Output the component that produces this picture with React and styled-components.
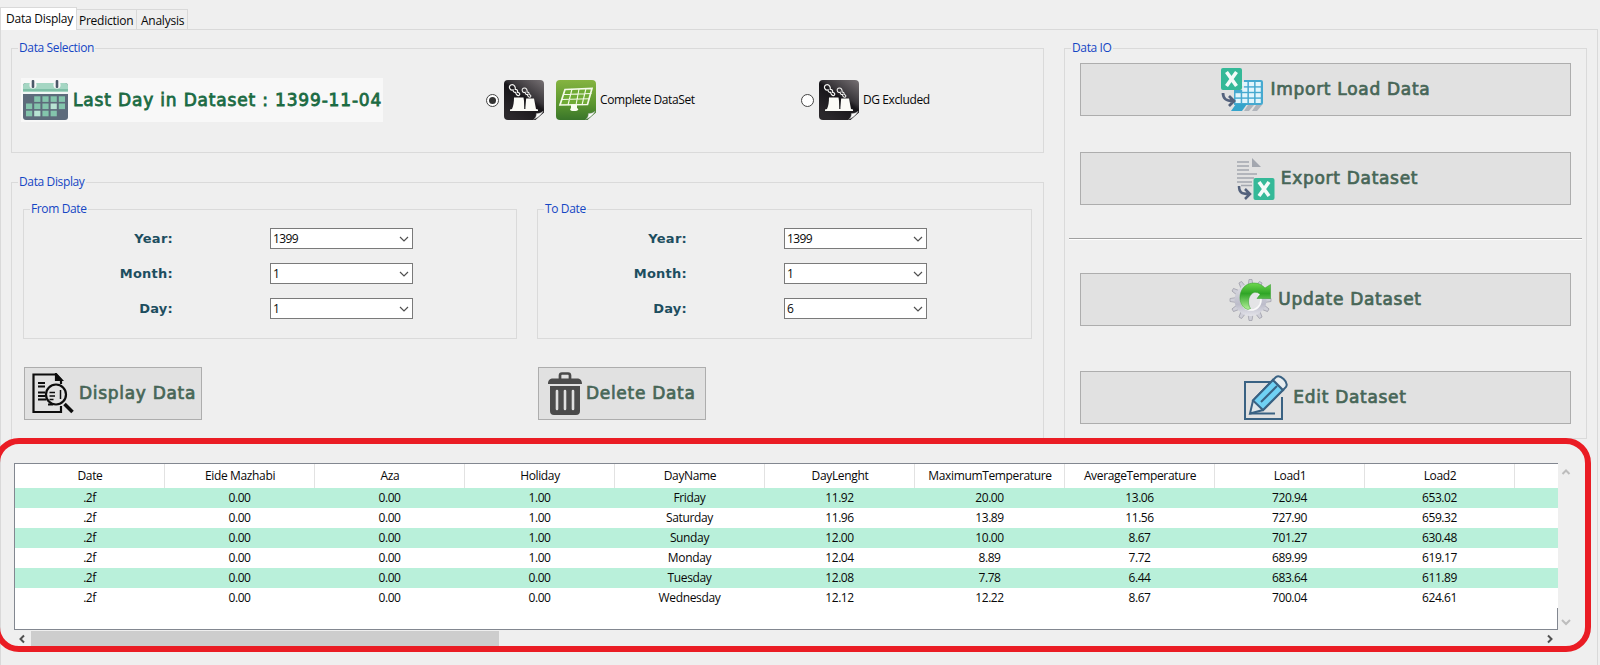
import React from 'react';
import styled, { createGlobalStyle } from 'styled-components';

const GlobalStyle = createGlobalStyle`
  * { box-sizing: border-box; }
  body { margin: 0; background: #efefef; overflow: hidden; font: 12px/16px "Open Sans", "Noto Sans", sans-serif; color: #080808; }
  button { font: inherit; padding: 0; }
`;
const verdana = '"DejaVu Sans", sans-serif';

const Window = styled.main`
  position: relative;
  width: 1600px; height: 665px;
  padding-top: 7px;
  overflow: hidden;
  background: #efefef;
`;
const Tabs = styled.nav` display: flex; align-items: flex-end; height: 23px; margin-bottom: -1px; `;
const Tab = styled.div`
  width: ${p => p.$w}px;
  height: ${p => (p.$active ? 23 : 21)}px;
  border: 1px solid #d9d9d9;
  border-left-width: ${p => (p.$active ? 1 : 0)}px;
  border-bottom-width: ${p => (p.$active ? 0 : 1)}px;
  background: ${p => (p.$active ? '#fff' : '#efefef')};
  padding-left: ${p => p.$pl}px;
  line-height: 22px;
  white-space: nowrap;
`;
const Spaced = styled.span` letter-spacing: ${p => p.$ls || 0}px; `;
const Page = styled.section`
  width: 1598px; height: 640px;
  border: 1px solid #d9d9d9; border-bottom: 0;
  padding: 10px 10px 0 10px;
`;
const Upper = styled.div` display: flex; gap: 20px; height: 399px; `;
const LeftColumn = styled.div` width: 1033px; `;
const Group = styled.fieldset`
  position: relative;
  display: flex;
  margin: 0 0 ${p => p.$mb || 0}px;
  padding: 0; min-width: 0;
  border: 0;
  width: ${p => p.$w}px; height: ${p => p.$h}px;
  &::before {
    content: ""; position: absolute; inset: 8px 0 0 0;
    border: 1px solid #dadada; pointer-events: none;
  }
`;
const Legend = styled.span`
  position: absolute; left: 7px; top: 0;
  background: #efefef; color: #1546c4;
  padding: 0 1px; letter-spacing: -0.37px;
  white-space: nowrap;
`;
const SelectionRow = styled.div` display: flex; align-items: center; height: 44px; margin: 38px 0 0 10px; `;
const LastDay = styled.div`
  display: flex; align-items: center; width: 362px; height: 44px; padding-left: 2px;
  background: #f8f8f8; color: #1b6b43;
  font: 17px/20px ${verdana}; -webkit-text-stroke: 0.8px #1b6b43; letter-spacing: 0.83px; white-space: nowrap;
  svg { margin-right: 5px; flex: none; }
`;
const RadioOption = styled.label`
  display: flex; align-items: center; margin-left: ${p => p.$ml}px; width: ${p => p.$w}px; white-space: nowrap;
  svg { flex: none; }
`;
const Radio = styled.span`
  width: 13px; height: 13px; border: 1px solid #444; border-radius: 50%; background: #fff;
  display: grid; place-items: center; margin-right: 5px; flex: none;
  &::after { content: ""; width: 7px; height: 7px; border-radius: 50%; background: ${p => (p.$on ? '#333' : 'transparent')}; }
`;
const IconPair = styled.span` display: flex; gap: 12px; margin-right: 4px; `;
const DisplayBody = styled.div` display: flex; gap: 20px; margin: 27px 0 0 12px; `;
const DateColumn = styled.div` width: ${p => p.$w}px; `;
const Fields = styled.div` display: grid; gap: 14px; padding-top: 27px; align-content: start; `;
const Field = styled.div` display: flex; align-items: center; height: 21px; `;
const FieldLabel = styled.span`
  width: 150px; margin-right: 97px; text-align: right; color: #1d4e5f;
  font: bold 13px/20px ${verdana}; letter-spacing: 0.25px;
`;
const Combo = styled.span`
  display: flex; align-items: center; justify-content: space-between;
  width: 143px; height: 21px; border: 1px solid #7a7a7a; background: #fff; padding: 0 2px;
  letter-spacing: -0.65px;
  svg { color: #505050; }
`;
const Button = styled.button`
  display: flex; align-items: center; justify-content: ${p => (p.$pl ? 'flex-start' : 'center')};
  width: ${p => p.$w}px; height: 53px; margin: 0 0 ${p => p.$mb || 0}px ${p => p.$ml || 0}px;
  padding: 0 0 2px ${p => p.$pl || 0}px;
  border: 1px solid #adadad; background: #e1e1e1; color: #476657;
  font: 17px/22px ${verdana}; -webkit-text-stroke: 0.7px #476657; letter-spacing: 0.7px; white-space: nowrap;
  svg { margin: 2px ${p => p.$gap}px 0 0; flex: none; }
`;
const IoColumn = styled.div` padding: 23px 0 0 16px; `;
const Rule = styled.div` width: 513px; height: 2px; margin: -20px 0 33px -11px; background: #a0a0a0; border-bottom: 1px solid #fff; `;

const TableArea = styled.div` display: grid; grid-template-columns: 1544px 17px; margin: 24px 0 0 3px; `;
const Table = styled.div`
  width: 1544px; height: 167px; overflow: hidden; background: #fff;
  border: 1px solid #828790; border-right: 0;
  display: flex; flex-direction: column;
`;
const Row = styled.div`
  display: flex; height: ${p => (p.$head ? 24 : 20)}px; line-height: ${p => (p.$head ? 23 : 19)}px; flex: none;
  background: ${p => (p.$tint ? '#b9f0da' : '#fff')};
`;
const Cell = styled.div`
  width: 150px; flex: none; text-align: center; padding-left: ${p => (p.$head ? 1 : 0)}px; letter-spacing: ${p => p.$ls}px;
  border-right: 1px solid ${p => (p.$head ? '#e2e2e2' : 'transparent')};
`;
const TableFoot = styled.div` flex: 1; border-right: 1px solid #828790; `;
const VScroll = styled.div` display: flex; flex-direction: column; justify-content: space-between; align-items: center; padding: 3px 1px 2px 0; color: #bdbdbd; `;
const HScroll = styled.div` display: flex; align-items: center; height: 15px; margin-top: 1px; color: #505050; padding: 0 2px; `;
const Thumb = styled.div` width: 468px; height: 15px; margin: 0 auto 0 3px; background: #cdcdcd; `;
const Highlight = styled.div`
  position: absolute; left: -6px; top: 438px; width: 1597px; height: 214px;
  border: 6px solid #ea1c24; border-radius: 25px; pointer-events: none;
`;

const Chevron = ({ dir, s = 12, w = 2 }) => {
  const d = { left: 'M8 2.500 4.500 6 8 9.500', right: 'M4 2.500 7.500 6 4 9.500', up: 'M2.500 8 6 4.500 9.500 8', down: 'M2 4l4 4 4-4' }[dir];
  return <svg width={s} height={s} viewBox="0 0 12 12" fill="none" stroke="currentColor" strokeWidth={w}><path d={d} /></svg>;
};

const CalendarIcon = () => (
  <svg width="45" height="40" viewBox="0 0 45 40">
    <rect y="3" width="45" height="37" rx="3" fill="#5d6b7b" />
    <path d="M0 12V6a3 3 0 0 1 3-3h39a3 3 0 0 1 3 3v6z" fill="#a5d6c3" />
    <rect y="9" width="45" height="2" fill="#7fbfa7" />
    <rect y="12" width="45" height="2" fill="#f2f6f5" />
    {[10, 34].map(x => <g key={x}><circle cx={x} cy="5" r="3.6" fill="#f8f8f8" /><rect x={x - 1.3} y="0" width="2.6" height="8" rx="1" fill="#4b5868" /></g>)}
    {[0, 1, 2].map(r => [0, 1, 2, 3, 4].map(c => (r === 0 && c === 0) || (r === 2 && c === 4) ? null :
      <rect key={`${r}${c}`} x={3 + c * 8.2} y={16.3 + r * 7.2} width="6.2" height="5.6" fill={(r === 1 && c === 3) || (r === 2 && c === 1) ? '#b8e3d3' : '#84c5ac'} />))}
  </svg>
);
const tile = 'M4 0h32a4 4 0 0 1 4 4v28.500l-8.500 7.500H4a4 4 0 0 1-4-4V4a4 4 0 0 1 4-4z';
const curl = 'M29.500 39.500c2-1.500 3-3.500 2.800-6 2.700 0 5.200-.8 7-2.500-1.500 3.500-5.500 7-9.800 8.500z';
const smoke = 'M15 15.500c1.500-1 .6-3-1.400-3.200.4-1.800-.6-3-2.300-2.900.4-2.700-1.100-4.700-3.100-4.700-2.200 0-3.400 2-2.400 3.900.6 1.300 2 1.700 3.200 1.200 0 1.900 1.200 2.900 2.700 2.500 0 2 1.600 3.600 3.300 3.200z';
const PlantIcon = () => (
  <svg width="40" height="40" viewBox="0 0 40 40">
    <defs><linearGradient id="coal" x1="1" y1="0" x2=".3" y2="1"><stop offset="0" stopColor="#777174" /><stop offset=".42" stopColor="#39363a" /><stop offset=".52" stopColor="#171519" /><stop offset="1" stopColor="#2b282c" /></linearGradient></defs>
    <path d={tile} fill="url(#coal)" />
    <path d="M10 17.500h9.500l1.500 10 1.200-9H30L32 29l2 .5V31H6v-1.500L8 29c1.500-3 2-7 2-11.500z" fill="#fbfbf7" />
    <path d="M20.800 20v9" stroke="#1b191c" strokeWidth="1.200" />
    <g fill="none" stroke="#f6f6f4" strokeWidth="1.200"><path d={smoke} /><path d={smoke} transform="translate(13.500 4) scale(.85)" /></g>
    <path d={curl} fill="#fafafa" stroke="#8d8d8d" strokeWidth=".4" />
  </svg>
);
const SolarIcon = () => (
  <svg width="40" height="40" viewBox="0 0 40 40">
    <defs><linearGradient id="leaf" x1="0" y1="0" x2="0" y2="1"><stop offset="0" stopColor="#85b440" /><stop offset=".6" stopColor="#5a952f" /><stop offset="1" stopColor="#39752a" /></linearGradient></defs>
    <path d={tile} fill="url(#leaf)" />
    <path d="M9 9.500 36 8.500l-4.500 16L4 25z" fill="#6fab35" stroke="#f4fae9" strokeWidth="1.700" />
    <path d="M16 9l-4 16M23 9l-3 16M30 8.500 26 25M7.500 14.500l28-1M5.500 19.500l28-.8" stroke="#f4fae9" strokeWidth="1.100" />
    <path d="M15 25h6v3c2 1 2 3-3 3s-4-2-3-3z" fill="#f8fcf0" />
    <path d={curl} fill="#fafafa" stroke="#8d9d8d" strokeWidth=".4" />
  </svg>
);
const ExcelBadge = ({ x, y }) => (
  <g transform={`translate(${x} ${y})`}><rect width="21" height="22" rx="2" fill="#35b998" /><path d="M5.500 4l10 14M15.500 4l-10 14" stroke="#f4fbf9" strokeWidth="3.600" /></g>
);
const ImportIcon = () => (
  <svg width="43" height="43" viewBox="0 0 43 43">
    <path d="M23 12h17a2 2 0 0 1 2 2v21a2 2 0 0 1-2 2H13V22h10z" fill="#46a9d0" />
    {[0, 1, 2, 3].map(r => [0, 1, 2, 3].map(c => (r < 2 && c < 1) ? null : <rect key={`${r}${c}`} x={14.500 + c * 6.700} y={14 + r * 5.600} width="5.200" height="4.200" fill="#e2f5fc" />))}
    <path d="M15 36h11l-5 7H10z" fill="#35a4cb" /><path d="M27 37h6l-5 6h-5zM35 37h6l-5 6h-5z" fill="#b0b4bb" />
    <ExcelBadge x="0" y="0" />
    <path d="M2 25c0 6 3 8 10 8M8 28l5 5-5 5" fill="none" stroke="#53617c" strokeWidth="2.800" />
  </svg>
);
const ExportIcon = () => (
  <svg width="42" height="42" viewBox="-3 0 42 42">
    <path d="M1 4h12M1 8h12M1 12h12M1 16h20M1 20h17M1 24h15M5 27.500h11" stroke="#a3a7af" strokeWidth="1.700" /><path d="M16 0l9 9h-9z" fill="#a3a7af" />
    <ExcelBadge x="17.500" y="20" /><path d="M3 28c0 6 2 8 10 8M9 31l5 5-5 5" fill="none" stroke="#53617c" strokeWidth="2.500" />
  </svg>
);
const UpdateIcon = () => (
  <svg width="43" height="44" viewBox="0 0 43 44">
    <defs><linearGradient id="steel" gradientUnits="userSpaceOnUse" x1="0" y1="0" x2="0" y2="44"><stop offset="0" stopColor="#ececef" /><stop offset=".6" stopColor="#bcbcca" /><stop offset="1" stopColor="#f8f8fa" /></linearGradient>
      <linearGradient id="lime" x1="0" y1="0" x2="0" y2="1"><stop offset="0" stopColor="#6fd84f" /><stop offset=".4" stopColor="#2fa526" /><stop offset="1" stopColor="#b4f09c" /></linearGradient></defs>
    <g fill="#cfcfd8" stroke="#9c9ca8" strokeWidth=".7">{Array.from({ length: 12 }, (_, i) => <path key={i} d="M19 8l1-6.500h3L24 8z" transform={`rotate(${i * 30} 21.500 22)`} />)}</g>
    <circle cx="21.500" cy="22" r="13" fill="none" stroke="url(#steel)" strokeWidth="6" />
    <circle cx="22" cy="22" r="10" fill="#e4e4e6" stroke="#fafafa" strokeWidth="1.600" />
    <path d="M19 31.500C7 29 8 5 25 5c5 0 8 2 11 5l5.500-3.500V20.500H28l3-4c-2-2.500-6-3-8.500-.5-3.500 3.500-4 10-1 14.500z" fill="url(#lime)" stroke="#2d9a24" strokeWidth=".5" />
  </svg>
);
const EditIcon = () => (
  <svg width="45" height="45" viewBox="0 0 45 45" fill="none" stroke="#3a6283" strokeWidth="2">
    <path d="M27 7H1v37h37V22" /><path d="M6 38.500h25" />
    <path d="M6 38.500l3-13L29 5l10 10-20 20z" fill="#dfe7ea" /><path d="M9 25.500 29 5l10 10-20 20z" fill="#70d1f4" />
    <path d="M29 5l3-3c4-3 13 5 10 10l-3 3z" fill="#e7edf0" /><path d="M17 27l16-16" />
  </svg>
);
const SearchDocIcon = () => (
  <svg width="42" height="41" viewBox="0 0 42 41" fill="none" stroke="#0d0d0d" strokeWidth="2.200">
    <path d="M29 11V7l-5-5.500H1.500V39H29v-6" /><path d="M24 1v6h5.500z" fill="#0d0d0d" />
    <path d="M6 10h7M6 13.500h7M6 19.500h7M6 23h7M6 26.500h8M16 31.500h5" strokeWidth="1.800" /><circle cx="24" cy="21.500" r="10" /><path d="M17.500 19.500h5.500M17.500 23h5.500M17.500 26.500h4M28.500 17v9" strokeWidth="1.500" /><path d="M32.500 31l8 8" strokeWidth="3.500" />
  </svg>
);
const TrashIcon = () => (
  <svg width="34" height="44" viewBox="0 0 34 44">
    <path d="M12 7V3.500a2 2 0 0 1 2-2h6a2 2 0 0 1 2 2V7" fill="none" stroke="#4b4b4b" strokeWidth="2.700" />
    <path d="M0 12c0-4 2-5.500 5-5.500h24c3 0 5 1.500 5 5.500zM2 14h30v25a4 4 0 0 1-4 4H6a4 4 0 0 1-4-4z" fill="#4b4b4b" />
    <path d="M9 19v18M17 19v18M25 19v18" stroke="#dedede" strokeWidth="2.600" strokeLinecap="round" />
  </svg>
);

const columns = ['Date', 'Eide Mazhabi', 'Aza', 'Holiday', 'DayName', 'DayLenght', 'MaximumTemperature', 'AverageTemperature', 'Load1', 'Load2', ''];
const rows = [
  ['.2f', '0.00', '0.00', '1.00', 'Friday', '11.92', '20.00', '13.06', '720.94', '653.02'],
  ['.2f', '0.00', '0.00', '1.00', 'Saturday', '11.96', '13.89', '11.56', '727.90', '659.32'],
  ['.2f', '0.00', '0.00', '1.00', 'Sunday', '12.00', '10.00', '8.67', '701.27', '630.48'],
  ['.2f', '0.00', '0.00', '1.00', 'Monday', '12.04', '8.89', '7.72', '689.99', '619.17'],
  ['.2f', '0.00', '0.00', '0.00', 'Tuesday', '12.08', '7.78', '6.44', '683.64', '611.89'],
  ['.2f', '0.00', '0.00', '0.00', 'Wednesday', '12.12', '12.22', '8.67', '700.04', '624.61'],
];

const DateGroup = ({ title, values, width }) => (
  <Group $w={width} $h={138} $mb={28}>
    <Legend>{title}</Legend>
    <Fields>
      {['Year:', 'Month:', 'Day:'].map((l, i) => (
        <Field key={l}><FieldLabel>{l}</FieldLabel><Combo>{values[i]}<Chevron dir="down" w={1.2} /></Combo></Field>
      ))}
    </Fields>
  </Group>
);

export default function App() {
  return (
    <Window>
      <GlobalStyle />
      <Tabs>
        <Tab $active $w={77} $pl={5}><Spaced $ls={-0.25}>Data Display</Spaced></Tab>
        <Tab $w={60} $pl={2}><Spaced $ls={-0.25}>Prediction</Spaced></Tab>
        <Tab $w={51} $pl={4}><Spaced $ls={-0.25}>Analysis</Spaced></Tab>
      </Tabs>
      <Page>
        <Upper>
          <LeftColumn>
            <Group $w={1033} $h={113} $mb={21}>
              <Legend>Data Selection</Legend>
              <SelectionRow>
                <LastDay><CalendarIcon />Last Day in Dataset : 1399-11-04</LastDay>
                <RadioOption $ml={103} $w={315}><Radio $on /><IconPair><PlantIcon /><SolarIcon /></IconPair><Spaced $ls={-0.4}>Complete DataSet</Spaced></RadioOption>
                <RadioOption $ml={0} $w={160}><Radio /><IconPair><PlantIcon /></IconPair><Spaced $ls={-0.4}>DG Excluded</Spaced></RadioOption>
              </SelectionRow>
            </Group>
            <Group $w={1033} $h={266}>
              <Legend>Data Display</Legend>
              <DisplayBody>
                <DateColumn $w={494}>
                  <DateGroup title="From Date" values={['1399', '1', '1']} width={494} />
                  <Button $w={178} $ml={1} $pl={7} $gap={5}><SearchDocIcon />Display Data</Button>
                </DateColumn>
                <DateColumn $w={495}>
                  <DateGroup title="To Date" values={['1399', '1', '6']} width={495} />
                  <Button $w={168} $ml={1} $pl={9} $gap={4}><TrashIcon />Delete Data</Button>
                </DateColumn>
              </DisplayBody>
            </Group>
          </LeftColumn>
          <Group $w={523} $h={399}>
            <Legend>Data IO</Legend>
            <IoColumn>
              <Button $w={491} $mb={36} $gap={7}><ImportIcon />Import Load Data</Button>
              <Button $w={491} $mb={53} $gap={6}><ExportIcon />Export Dataset</Button>
              <Rule />
              <Button $w={491} $mb={45} $gap={6}><UpdateIcon />Update Dataset</Button>
              <Button $w={491} $gap={4}><EditIcon />Edit Dataset</Button>
            </IoColumn>
          </Group>
        </Upper>
        <TableArea>
          <Table>
            <Row $head>{columns.map((c, i) => <Cell $head key={i} $ls={-0.35}>{c}</Cell>)}</Row>
            {rows.map((r, i) => <Row key={i} $tint={i % 2 === 0}>{r.map((v, j) => <Cell key={j} $ls={j === 4 ? -0.35 : -0.45}>{v}</Cell>)}</Row>)}
            <TableFoot />
          </Table>
          <VScroll><Chevron dir="up" /><Chevron dir="down" /></VScroll>
          <HScroll><Chevron dir="left" /><Thumb /><Chevron dir="right" /></HScroll>
        </TableArea>
      </Page>
      <Highlight />
    </Window>
  );
}
